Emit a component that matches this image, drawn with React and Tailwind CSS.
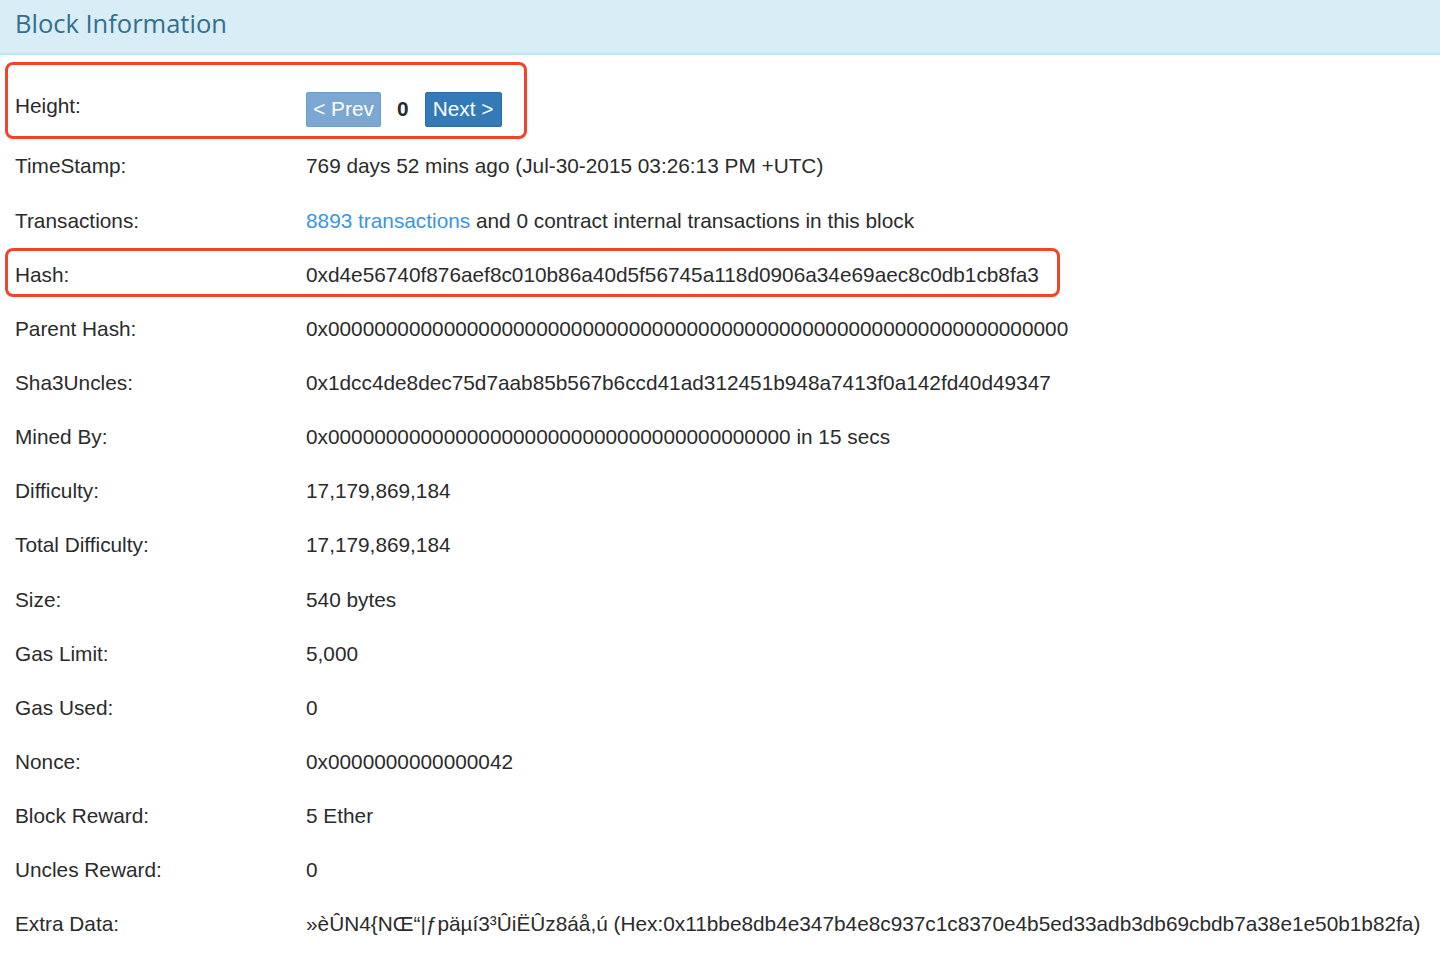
import React from "react";

const rows = [
  ["TimeStamp:", "769 days 52 mins ago (Jul-30-2015 03:26:13 PM +UTC)"],
  ["Transactions:", "tx"],
  ["Hash:", "0xd4e56740f876aef8c010b86a40d5f56745a118d0906a34e69aec8c0db1cb8fa3"],
  ["Parent Hash:", "0x0000000000000000000000000000000000000000000000000000000000000000"],
  ["Sha3Uncles:", "0x1dcc4de8dec75d7aab85b567b6ccd41ad312451b948a7413f0a142fd40d49347"],
  ["Mined By:", "0x0000000000000000000000000000000000000000 in 15 secs"],
  ["Difficulty:", "17,179,869,184"],
  ["Total Difficulty:", "17,179,869,184"],
  ["Size:", "540 bytes"],
  ["Gas Limit:", "5,000"],
  ["Gas Used:", "0"],
  ["Nonce:", "0x0000000000000042"],
  ["Block Reward:", "5 Ether"],
  ["Uncles Reward:", "0"],
  ["Extra Data:", "»èÛN4{NŒ“|ƒpäµí3³ÛiËÛz8áå,ú (Hex:0x11bbe8db4e347b4e8c937c1c8370e4b5ed33adb3db69cbdb7a38e1e50b1b82fa)"],
];

const App = () => {
  return (
    <div
      className="relative min-h-[957px] bg-white text-[#2b2b2b] text-[20.8px] overflow-hidden"
      style={{ fontFamily: '"Liberation Sans", Arial, sans-serif' }}
    >
      <div className="h-[55px] bg-[#d9edf7] border-b-2 border-[#bce8f1] flex items-center px-[15px]">
        <h3
          className="text-[#31708f] text-[25.5px] leading-none pb-[6px]"
          style={{ fontFamily: '"Open Sans", sans-serif' }}
        >
          Block Information
        </h3>
      </div>

      {/* height row */}
      <div className="mt-[24px] h-[60px] flex items-center px-[15px]">
        <div className="w-[291px] mb-[6px]">Height:</div>
        <div className="flex items-center">
          <button className="w-[75px] h-[35px] bg-[#7ba7d1] border border-[#6d9dca] text-white rounded-[2px] flex items-center justify-center">
            &lt; Prev
          </button>
          <span className="mx-[16px] font-bold">0</span>
          <button className="w-[77px] h-[35px] bg-[#337ab7] border border-[#2e6da4] text-white rounded-[2px] flex items-center justify-center">
            Next &gt;
          </button>
        </div>
      </div>

      {rows.map(([label, value]) => (
        <div key={label} className="h-[54.15px] flex items-center px-[15px] whitespace-nowrap">
          <div className="w-[291px] shrink-0">{label}</div>
          <div>
            {value === "tx" ? (
              <>
                <a className="text-[#3a96dd]">8893 transactions</a> and 0 contract internal transactions in this block
              </>
            ) : (
              value
            )}
          </div>
        </div>
      ))}

      {/* annotation boxes */}
      <div className="absolute left-[5px] top-[62px] w-[522px] h-[77px] border-[3px] border-[#f5432a] rounded-[8px]" />
      <div className="absolute left-[5px] top-[248px] w-[1055px] h-[49px] border-[3px] border-[#f5432a] rounded-[8px]" />
    </div>
  );
};

export default App;
